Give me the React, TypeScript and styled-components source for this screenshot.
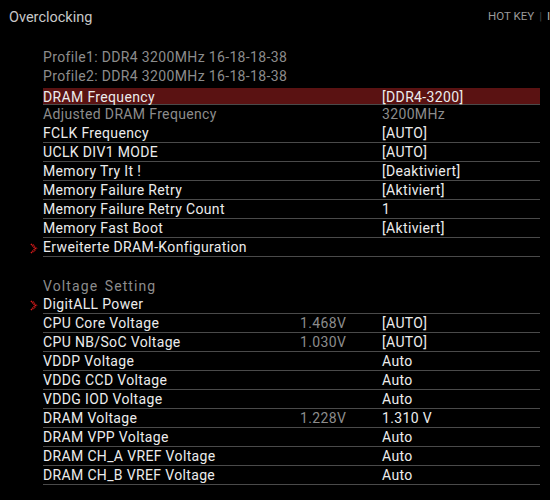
import React from "react";
import styled, { createGlobalStyle } from "styled-components";

const Global = createGlobalStyle`
  html, body { margin: 0; padding: 0; background: #000; }
  body { width: 550px; height: 500px; overflow: hidden; font-family: Roboto, "Liberation Sans", sans-serif; }
`;

const Page = styled.div`
  width: 550px;
  height: 500px;
  background: #000;
  color: #e8e8e8;
  display: flex;
  flex-direction: column;
  overflow: hidden;
`;

const Header = styled.div`
  height: 48px;
  flex-shrink: 0;
  display: flex;
  align-items: flex-start;
  justify-content: space-between;
  padding: 9px 0 0 9px;
  box-sizing: border-box;
`;

const Title = styled.div`
  font-size: 14.5px;
  color: #c8c8c8;
  line-height: 18px;
`;

const HotKey = styled.div`
  display: flex;
  align-items: center;
  gap: 5px;
  font-size: 11.5px;
  color: #9a9a9a;
  line-height: 18px;
  margin-top: -2px;
  white-space: nowrap;
  overflow: hidden;
  width: 62px;
`;

const Sep = styled.span`
  color: #444;
`;

const Cut = styled.span`
  color: #bbb;
`;

const List = styled.div`
  display: flex;
  flex-direction: column;
  padding-left: 43px;
  width: 497px;
`;

const Row = styled.div<{ $line?: boolean; $active?: boolean }>`
  position: relative;
  height: 19px;
  flex-shrink: 0;
  box-sizing: border-box;
  display: grid;
  grid-template-columns: 257px 82px 1fr;
  align-items: center;
  font-size: 14px;
  letter-spacing: 0.35px;
  line-height: 18px;
  border-bottom: 1px solid ${(p) => (p.$line ? "#4a4a4a" : "transparent")};
  background: ${(p) => (p.$active ? "#5a1212" : "transparent")};
  background-clip: content-box;
  padding-top: ${(p) => (p.$active ? "2px" : "0")};
`;

const Cell = styled.span<{ $dim?: boolean }>`
  color: ${(p) => (p.$dim ? "#8c8c8c" : "#ececec")};
  white-space: nowrap;
`;

const Section = styled.div`
  height: 19px;
  flex-shrink: 0;
  margin-top: 19px;
  display: flex;
  align-items: center;
  font-size: 14px;
  letter-spacing: 1.1px;
  word-spacing: 2px;
  color: #8c8c8c;
`;

const Arrow = styled.svg`
  position: absolute;
  left: -13px;
  top: 5px;
`;

const Chevron = () => (
  <Arrow width="8" height="11" viewBox="0 0 8 11">
    <polyline points="1,1 5.5,5.5 1,10" fill="none" stroke="#e01c1c" strokeWidth="1.6" strokeDasharray="1.3 0.6" />
    <polyline points="3,1 7,5.5 3,10" fill="none" stroke="#b01010" strokeWidth="1" strokeDasharray="1 1" />
  </Arrow>
);

type Item = { label: string; reading?: string; value?: string; dim?: boolean; line?: boolean; active?: boolean; sub?: boolean };

const top: Item[] = [
  { label: "Profile1: DDR4 3200MHz 16-18-18-38", dim: true },
  { label: "Profile2: DDR4 3200MHz 16-18-18-38", dim: true },
  { label: "DRAM Frequency", value: "[DDR4-3200]", line: true, active: true },
  { label: "Adjusted DRAM Frequency", value: "3200MHz", dim: true },
  { label: "FCLK Frequency", value: "[AUTO]", line: true },
  { label: "UCLK DIV1 MODE", value: "[AUTO]", line: true },
  { label: "Memory Try It !", value: "[Deaktiviert]", line: true },
  { label: "Memory Failure Retry", value: "[Aktiviert]", line: true },
  { label: "Memory Failure Retry Count", value: "1", line: true },
  { label: "Memory Fast Boot", value: "[Aktiviert]", line: true },
  { label: "Erweiterte DRAM-Konfiguration", line: true, sub: true },
];

const volt: Item[] = [
  { label: "DigitALL Power", line: true, sub: true },
  { label: "CPU Core Voltage", reading: "1.468V", value: "[AUTO]", line: true },
  { label: "CPU NB/SoC Voltage", reading: "1.030V", value: "[AUTO]", line: true },
  { label: "VDDP Voltage", value: "Auto", line: true },
  { label: "VDDG CCD Voltage", value: "Auto", line: true },
  { label: "VDDG IOD Voltage", value: "Auto", line: true },
  { label: "DRAM Voltage", reading: "1.228V", value: "1.310 V", line: true },
  { label: "DRAM VPP Voltage", value: "Auto", line: true },
  { label: "DRAM CH_A VREF Voltage", value: "Auto", line: true },
  { label: "DRAM CH_B VREF Voltage", value: "Auto", line: true },
];

const renderRow = (it: Item) => (
  <Row key={it.label} $line={it.line} $active={it.active}>
    {it.sub && <Chevron />}
    <Cell $dim={it.dim}>{it.label}</Cell>
    <Cell $dim>{it.reading ?? ""}</Cell>
    <Cell $dim={it.dim}>{it.value ?? ""}</Cell>
  </Row>
);

export default function App() {
  return (
    <Page>
      <Global />
      <Header>
        <Title>Overclocking</Title>
        <HotKey>
          HOT KEY <Sep>|</Sep> <Cut>I</Cut>
        </HotKey>
      </Header>
      <List>
        {top.map(renderRow)}
        <Section>Voltage Setting</Section>
        {volt.map(renderRow)}
      </List>
    </Page>
  );
}
